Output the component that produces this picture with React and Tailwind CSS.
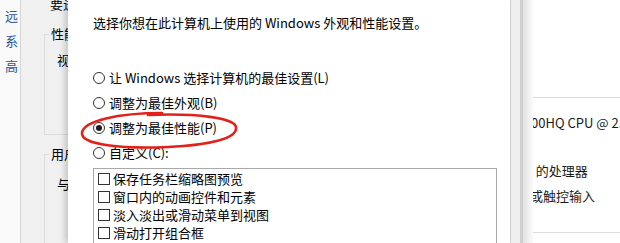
import React from "react";

const font = { fontFamily: '"Noto Sans CJK SC", "Noto Sans", sans-serif' };

function Radio({ checked, label }) {
  return (
    <div className="flex h-[25px] items-center gap-[4px]">
      <span className="flex h-[12px] w-[12px] items-center justify-center rounded-full border border-[#333] bg-white">
        {checked && <span className="h-[6px] w-[6px] rounded-full bg-[#1a1a1a]" />}
      </span>
      <span className="whitespace-nowrap">{label}</span>
    </div>
  );
}

function Check({ label }) {
  return (
    <div className="flex h-[18px] items-center gap-[3px] pl-[4px]">
      <span className="h-[12px] w-[12px] border border-[#333] bg-white" />
      <span className="whitespace-nowrap">{label}</span>
    </div>
  );
}

export default function App() {
  const options = [
    "保存任务栏缩略图预览",
    "窗口内的动画控件和元素",
    "淡入淡出或滑动菜单到视图",
    "滑动打开组合框",
  ];

  return (
    <div
      className="flex h-[243px] w-[620px] overflow-hidden bg-white text-[13px] leading-[18px] text-black"
      style={font}
    >
      {/* sidebar of the window behind */}
      <div className="flex w-[20px] shrink-0 flex-col gap-[7px] bg-[#f9f9f9] pl-[5px] pt-[7px] text-[#2b5697]">
        <span>远</span>
        <span>系</span>
        <span>高</span>
      </div>

      {/* System properties dialog, mostly covered */}
      <div className="w-[48px] shrink-0 overflow-hidden border-l border-[#d4d4d4] bg-[#f0f0f0]">
        <div className="w-[300px]">
          <div className="mt-[-5px] whitespace-nowrap pl-[29px]">要进行大多数更改，你必须作为管理员登录。</div>
          <fieldset className="ml-[23px] mt-[12px] h-[110px] border border-[#dcdcdc]">
            <legend className="ml-[4px] px-[2px]">性能</legend>
            <div className="mt-[8px] whitespace-nowrap pl-[12px]">视觉效果，处理器计划，内存使用，以及虚拟内存</div>
          </fieldset>
          <fieldset className="ml-[23px] mt-[10px] h-[120px] border border-b-0 border-[#dcdcdc]">
            <legend className="ml-[4px] px-[2px]">用户配置文件</legend>
            <div className="mt-[12px] whitespace-nowrap pl-[12px]">与登录帐户相关的桌面设置</div>
          </fieldset>
        </div>
      </div>

      {/* Performance options dialog */}
      <div className="relative z-10 w-[442px] shrink-0 bg-white pl-[25px] pt-[13px] shadow-[-3px_0_6px_rgba(0,0,0,0.18)]">
        <div className="h-[20px] whitespace-nowrap leading-[20px]">
          选择你想在此计算机上使用的 Windows 外观和性能设置。
        </div>
        <div className="mt-[32px]">
          <Radio label="让 Windows 选择计算机的最佳设置(L)" />
          <Radio label="调整为最佳外观(B)" />
          <Radio checked label="调整为最佳性能(P)" />
          <Radio label="自定义(C):" />
        </div>
        <div className="mt-[3px] h-[90px] w-[404px] border border-[#a9a9a9] pt-px">
          {options.map((o) => (
            <Check key={o} label={o} />
          ))}
        </div>

        <svg
          className="pointer-events-none absolute left-[10px] top-[110px]"
          width="165"
          height="44"
          viewBox="0 0 165 44"
        >
          <path
            d="M84 3 C 40 3, 5 11, 4 23 C 3 35, 45 39, 90 37 C 130 35, 160 29, 158 17 C 156 8, 120 3, 70 5"
            fill="none"
            stroke="#e3211b"
            strokeWidth="2.6"
            strokeLinecap="round"
          />
        </svg>
      </div>

      {/* gap / frame between windows */}
      <div className="flex w-[23px] shrink-0">
        <div className="w-[10px] border-l border-[#d6d6d6] bg-[#efefef]" />
        <div className="w-[3px] bg-[#cfcfcf]" />
        <div className="w-[10px] bg-gradient-to-r from-[#e2e2e2] to-[#fbfbfb]" />
      </div>

      {/* right window */}
      <div className="min-w-0 flex-1 overflow-hidden bg-white text-[#1a1a1a]">
        <div className="mt-[97px] border-t border-[#dcdcdc]" />
        <div className="ml-[-2px] mt-[16px] whitespace-nowrap">00HQ CPU @ 2.80GHz</div>
        <div className="ml-[-21px] mt-[30px] whitespace-nowrap">x64 的处理器</div>
        <div className="ml-[-16px] mt-[7px] whitespace-nowrap">笔或触控输入</div>
        <div className="mt-[27px] border-t border-[#dcdcdc]" />
      </div>
    </div>
  );
}
